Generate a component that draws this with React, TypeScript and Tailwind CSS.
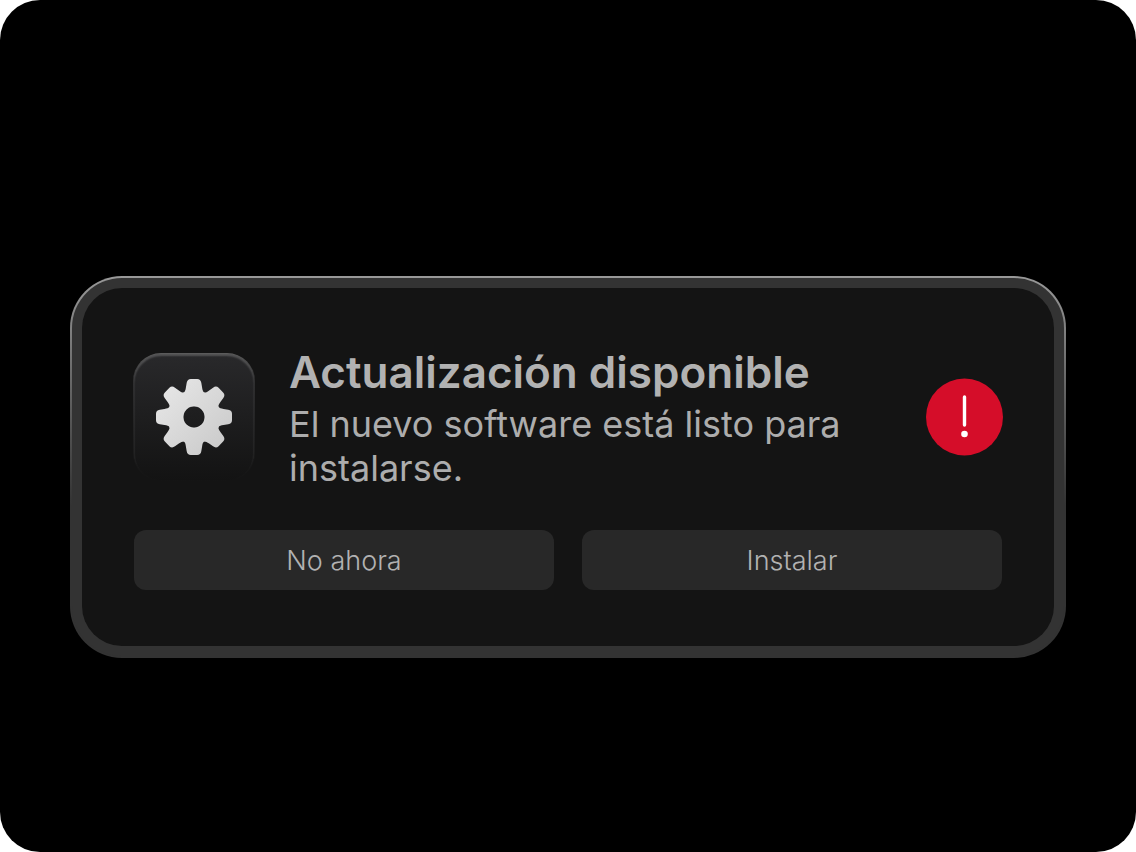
import React from "react";

const TOOTH_ANGLES = [0, 45, 90, 135, 180, 225, 270, 315];

const GearIcon: React.FC = () => (
  <svg viewBox="-38 -38 76 76" className="h-19 w-19" aria-hidden="true">
    <defs>
      <linearGradient
        id="gear-fill"
        gradientUnits="userSpaceOnUse"
        x1="-27"
        y1="-27"
        x2="27"
        y2="27"
      >
        <stop offset="0" stopColor="#e4e4e4" />
        <stop offset="1" stopColor="#cccccc" />
      </linearGradient>
      <mask id="gear-shape">
        <circle r="26.5" fill="#fff" />
        {TOOTH_ANGLES.map((angle) => (
          <path
            key={angle}
            transform={`rotate(${angle})`}
            fill="#fff"
            d="M-10.2 -24.3C-9 -25.4 -8.4 -27 -8.1 -29.5L-7.3 -34.2Q-6.6 -38 -3.2 -38H3.2Q6.6 -38 7.3 -34.2L8.1 -29.5C8.4 -27 9 -25.4 10.2 -24.3L8 -16H-8Z"
          />
        ))}
        <circle r="10.7" fill="#000" />
      </mask>
    </defs>
    <rect
      x="-38"
      y="-38"
      width="76"
      height="76"
      fill="url(#gear-fill)"
      mask="url(#gear-shape)"
    />
    <circle r="11" fill="none" stroke="#f0f0f0" strokeOpacity="0.4" />
  </svg>
);

const AlertIcon: React.FC = () => (
  <svg
    viewBox="0 0 78 78"
    className="h-[78px] w-[78px] shrink-0"
    role="img"
    aria-label="Aviso"
  >
    <circle cx="39.5" cy="39" r="38.5" fill="#d50d29" />
    <path
      d="M39.5 19V47"
      stroke="#fff"
      strokeWidth="3.4"
      strokeLinecap="round"
    />
    <circle cx="39.5" cy="56" r="3.3" fill="#fff" />
  </svg>
);

const ACTIONS = ["No ahora", "Instalar"];

export default function App() {
  return (
    <main className="flex min-h-screen items-center rounded-[40px] bg-black px-[70px] pt-[82px] font-['Inter',sans-serif] text-[#b2b2b2]">
      <section
        aria-labelledby="update-title"
        className="w-full rounded-[52px] bg-linear-to-b from-[#999999] to-[#333333] to-60% p-0.5"
      >
        <div className="rounded-[50px] bg-[#333333] p-2.5">
          <div className="rounded-[40px] bg-[#141414] px-[52px] py-14">
            <div className="-mx-px flex items-center">
              <div className="rounded-[28px] bg-linear-to-b from-[#5c5c5c] via-[#303031] via-20% to-[#141414] p-px">
                <div className="flex h-[126px] w-[120px] items-center justify-center rounded-[27px] bg-linear-to-b from-[#29292b] to-[#131313] shadow-[inset_0_2px_2px_rgba(255,255,255,0.2)]">
                  <GearIcon />
                </div>
              </div>
              <div className="ml-[34px] min-w-0 flex-1">
                <h1
                  id="update-title"
                  className="text-[44px] leading-14 font-semibold"
                >
                  Actualización disponible
                </h1>
                <p className="mt-0.5 text-4xl leading-[44px] text-[#adadad]">
                  El nuevo software está listo para instalarse.
                </p>
              </div>
              <AlertIcon />
            </div>
            <div className="mt-10 grid grid-cols-2 gap-7">
              {ACTIONS.map((action) => (
                <button
                  key={action}
                  type="button"
                  className="h-15 rounded-xl bg-[#282828] pt-0.5 text-[27px] font-light"
                >
                  {action}
                </button>
              ))}
            </div>
          </div>
        </div>
      </section>
    </main>
  );
}
